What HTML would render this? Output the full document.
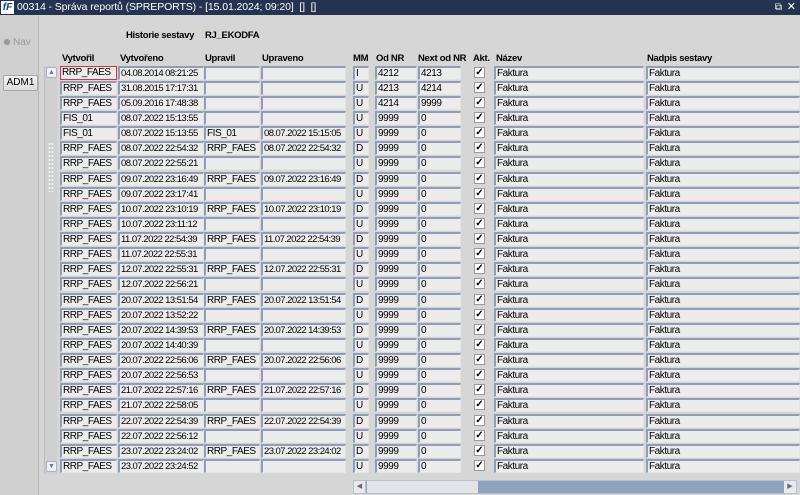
<!DOCTYPE html>
<html><head><meta charset="utf-8"><style>
*{margin:0;padding:0;box-sizing:border-box}
body{width:800px;height:495px;overflow:hidden;background:#d6d6d6;font-family:"Liberation Sans",sans-serif;font-size:10px;color:#000;position:relative}
#tb{position:absolute;left:0;top:0;width:800px;height:15px;background:#25344e;color:#fff;font-size:10.5px;line-height:15px}
#tb .lg{position:absolute;left:1px;top:1px;width:13px;height:13px;background:#fff;color:#1a3ca0;font-weight:bold;font-style:italic;font-size:10px;line-height:13px;text-align:center}
#tb .t{position:absolute;left:17px;top:0;white-space:nowrap;letter-spacing:-0.1px}
#left{position:absolute;left:0;top:15px;width:39px;height:480px;background:#d0d0d0;border-right:1px solid #b8b8b8}
.nav{position:absolute;left:3px;top:22px;color:#9a9a9a;font-size:10px}
.nav i{display:inline-block;width:8px;height:8px;border-radius:50%;background:#9a9a9a;border:1px solid #c8c8c8;vertical-align:-1px;margin-right:2px}
.adm{position:absolute;left:3px;top:60px;width:35px;height:16px;border:1px solid #a8a8a8;border-radius:2px;background:linear-gradient(#f4f4f4,#dcdcdc);text-align:center;line-height:14px;font-size:10px}
.h{position:absolute;font-weight:bold;font-size:9.5px;white-space:nowrap;letter-spacing:-0.3px}
.vs{position:absolute;left:44px;top:66px;width:13px;height:408px;background:#cfcfcf;border-left:1px solid #bdbdbd}
.ab{position:absolute;left:1px;width:11px;height:11px;border:1px solid #a8b4c6;border-radius:2px;background:#eef0f4;color:#6a7a94;font-size:7px;line-height:9px;text-align:center}
.dots{position:absolute;left:3px;top:76px;width:6px;height:50px;background:radial-gradient(circle,#f4f4f4 0.8px,transparent 1.2px) 0 0/3px 4px}
.r{position:absolute;left:0;width:800px;height:15px}
.r div{position:absolute;top:0;height:14px;background:#ececec;border:1px solid #e4e4e4;border-top:2px solid #8f9eb6;border-left:2px solid #8f9eb6;padding-left:1px;line-height:11px;overflow:hidden;white-space:nowrap;letter-spacing:-0.45px}
.r div.b,.r div.d{font-size:9.5px;letter-spacing:-0.55px}
.a{left:60px;width:57px}.b{left:118px;width:86px}.c{left:204px;width:56px}.d{left:261px;width:85px}
.e{left:353px;width:16px}.f{left:375px;width:42px}.g{left:418px;width:43px}.n{left:494px;width:150px}.p{left:646px;width:154px}
.r span.k{position:absolute;left:474px;top:1px;width:11px;height:11px;background:#fff;border:1px solid #9a9a9a;font-size:10px;line-height:9px;text-align:center;font-weight:bold}
.hs{position:absolute;left:353px;top:480px;width:444px;height:14px;background:#8fa3bf;border:1px solid #b4bfd0}
.hs .th{position:absolute;left:13px;top:0;width:111px;height:12px;background:#e2e4e8}
.hs .l{position:absolute;left:0;top:0;width:12px;height:12px;background:#e8eaee;border-right:1px solid #b4bfd0;font-size:7px;line-height:12px;text-align:center;color:#667}
.hs .rr{position:absolute;right:0;top:0;width:12px;height:12px;background:#e8eaee;font-size:7px;line-height:12px;text-align:center;color:#667}
</style></head><body>
<div id="tb"><div class="lg">fF</div><div class="t">00314 - Správa reportů (SPREPORTS) - [15.01.2024; 09:20]&nbsp; []&nbsp; []</div>
<div style="position:absolute;right:18px;top:0;font-size:10px">&#10697;</div><div style="position:absolute;right:4px;top:0;font-size:11px">&#10005;</div></div>
<div id="left"><div class="nav"><i></i>Nav</div><div class="adm">ADM1</div></div>
<div class="h" style="left:126px;top:30px">Historie sestavy</div>
<div class="h" style="left:205px;top:30px">RJ_EKODFA</div>
<div class="h" style="left:62px;top:53px">Vytvořil</div>
<div class="h" style="left:120px;top:53px">Vytvořeno</div>
<div class="h" style="left:205px;top:53px">Upravil</div>
<div class="h" style="left:262px;top:53px">Upraveno</div>
<div class="h" style="left:353px;top:53px">MM</div>
<div class="h" style="left:376px;top:53px">Od NR</div>
<div class="h" style="left:418px;top:53px">Next od NR</div>
<div class="h" style="left:473px;top:53px">Akt.</div>
<div class="h" style="left:496px;top:53px">Název</div>
<div class="h" style="left:647px;top:53px">Nadpis sestavy</div>
<div class="vs"><div class="ab" style="top:1px">&#9650;</div><div class="dots"></div><div class="ab" style="top:395px">&#9660;</div></div>

<div class="r" style="top:66px"><div class="a" style="border:1px solid #e03030">RRP_FAES</div><div class="b">04.08.2014 08:21:25</div><div class="c"></div><div class="d"></div><div class="e">I</div><div class="f">4212</div><div class="g">4213</div><span class="k">✓</span><div class="n">Faktura</div><div class="p">Faktura</div></div>
<div class="r" style="top:81px"><div class="a">RRP_FAES</div><div class="b">31.08.2015 17:17:31</div><div class="c"></div><div class="d"></div><div class="e">U</div><div class="f">4213</div><div class="g">4214</div><span class="k">✓</span><div class="n">Faktura</div><div class="p">Faktura</div></div>
<div class="r" style="top:96px"><div class="a">RRP_FAES</div><div class="b">05.09.2016 17:48:38</div><div class="c"></div><div class="d"></div><div class="e">U</div><div class="f">4214</div><div class="g">9999</div><span class="k">✓</span><div class="n">Faktura</div><div class="p">Faktura</div></div>
<div class="r" style="top:111px"><div class="a">FIS_01</div><div class="b">08.07.2022 15:13:55</div><div class="c"></div><div class="d"></div><div class="e">U</div><div class="f">9999</div><div class="g">0</div><span class="k">✓</span><div class="n">Faktura</div><div class="p">Faktura</div></div>
<div class="r" style="top:126px"><div class="a">FIS_01</div><div class="b">08.07.2022 15:13:55</div><div class="c">FIS_01</div><div class="d">08.07.2022 15:15:05</div><div class="e">U</div><div class="f">9999</div><div class="g">0</div><span class="k">✓</span><div class="n">Faktura</div><div class="p">Faktura</div></div>
<div class="r" style="top:141px"><div class="a">RRP_FAES</div><div class="b">08.07.2022 22:54:32</div><div class="c">RRP_FAES</div><div class="d">08.07.2022 22:54:32</div><div class="e">D</div><div class="f">9999</div><div class="g">0</div><span class="k">✓</span><div class="n">Faktura</div><div class="p">Faktura</div></div>
<div class="r" style="top:156px"><div class="a">RRP_FAES</div><div class="b">08.07.2022 22:55:21</div><div class="c"></div><div class="d"></div><div class="e">U</div><div class="f">9999</div><div class="g">0</div><span class="k">✓</span><div class="n">Faktura</div><div class="p">Faktura</div></div>
<div class="r" style="top:172px"><div class="a">RRP_FAES</div><div class="b">09.07.2022 23:16:49</div><div class="c">RRP_FAES</div><div class="d">09.07.2022 23:16:49</div><div class="e">D</div><div class="f">9999</div><div class="g">0</div><span class="k">✓</span><div class="n">Faktura</div><div class="p">Faktura</div></div>
<div class="r" style="top:187px"><div class="a">RRP_FAES</div><div class="b">09.07.2022 23:17:41</div><div class="c"></div><div class="d"></div><div class="e">U</div><div class="f">9999</div><div class="g">0</div><span class="k">✓</span><div class="n">Faktura</div><div class="p">Faktura</div></div>
<div class="r" style="top:202px"><div class="a">RRP_FAES</div><div class="b">10.07.2022 23:10:19</div><div class="c">RRP_FAES</div><div class="d">10.07.2022 23:10:19</div><div class="e">D</div><div class="f">9999</div><div class="g">0</div><span class="k">✓</span><div class="n">Faktura</div><div class="p">Faktura</div></div>
<div class="r" style="top:217px"><div class="a">RRP_FAES</div><div class="b">10.07.2022 23:11:12</div><div class="c"></div><div class="d"></div><div class="e">U</div><div class="f">9999</div><div class="g">0</div><span class="k">✓</span><div class="n">Faktura</div><div class="p">Faktura</div></div>
<div class="r" style="top:232px"><div class="a">RRP_FAES</div><div class="b">11.07.2022 22:54:39</div><div class="c">RRP_FAES</div><div class="d">11.07.2022 22:54:39</div><div class="e">D</div><div class="f">9999</div><div class="g">0</div><span class="k">✓</span><div class="n">Faktura</div><div class="p">Faktura</div></div>
<div class="r" style="top:247px"><div class="a">RRP_FAES</div><div class="b">11.07.2022 22:55:31</div><div class="c"></div><div class="d"></div><div class="e">U</div><div class="f">9999</div><div class="g">0</div><span class="k">✓</span><div class="n">Faktura</div><div class="p">Faktura</div></div>
<div class="r" style="top:262px"><div class="a">RRP_FAES</div><div class="b">12.07.2022 22:55:31</div><div class="c">RRP_FAES</div><div class="d">12.07.2022 22:55:31</div><div class="e">D</div><div class="f">9999</div><div class="g">0</div><span class="k">✓</span><div class="n">Faktura</div><div class="p">Faktura</div></div>
<div class="r" style="top:277px"><div class="a">RRP_FAES</div><div class="b">12.07.2022 22:56:21</div><div class="c"></div><div class="d"></div><div class="e">U</div><div class="f">9999</div><div class="g">0</div><span class="k">✓</span><div class="n">Faktura</div><div class="p">Faktura</div></div>
<div class="r" style="top:293px"><div class="a">RRP_FAES</div><div class="b">20.07.2022 13:51:54</div><div class="c">RRP_FAES</div><div class="d">20.07.2022 13:51:54</div><div class="e">D</div><div class="f">9999</div><div class="g">0</div><span class="k">✓</span><div class="n">Faktura</div><div class="p">Faktura</div></div>
<div class="r" style="top:308px"><div class="a">RRP_FAES</div><div class="b">20.07.2022 13:52:22</div><div class="c"></div><div class="d"></div><div class="e">U</div><div class="f">9999</div><div class="g">0</div><span class="k">✓</span><div class="n">Faktura</div><div class="p">Faktura</div></div>
<div class="r" style="top:323px"><div class="a">RRP_FAES</div><div class="b">20.07.2022 14:39:53</div><div class="c">RRP_FAES</div><div class="d">20.07.2022 14:39:53</div><div class="e">D</div><div class="f">9999</div><div class="g">0</div><span class="k">✓</span><div class="n">Faktura</div><div class="p">Faktura</div></div>
<div class="r" style="top:338px"><div class="a">RRP_FAES</div><div class="b">20.07.2022 14:40:39</div><div class="c"></div><div class="d"></div><div class="e">U</div><div class="f">9999</div><div class="g">0</div><span class="k">✓</span><div class="n">Faktura</div><div class="p">Faktura</div></div>
<div class="r" style="top:353px"><div class="a">RRP_FAES</div><div class="b">20.07.2022 22:56:06</div><div class="c">RRP_FAES</div><div class="d">20.07.2022 22:56:06</div><div class="e">D</div><div class="f">9999</div><div class="g">0</div><span class="k">✓</span><div class="n">Faktura</div><div class="p">Faktura</div></div>
<div class="r" style="top:368px"><div class="a">RRP_FAES</div><div class="b">20.07.2022 22:56:53</div><div class="c"></div><div class="d"></div><div class="e">U</div><div class="f">9999</div><div class="g">0</div><span class="k">✓</span><div class="n">Faktura</div><div class="p">Faktura</div></div>
<div class="r" style="top:383px"><div class="a">RRP_FAES</div><div class="b">21.07.2022 22:57:16</div><div class="c">RRP_FAES</div><div class="d">21.07.2022 22:57:16</div><div class="e">D</div><div class="f">9999</div><div class="g">0</div><span class="k">✓</span><div class="n">Faktura</div><div class="p">Faktura</div></div>
<div class="r" style="top:398px"><div class="a">RRP_FAES</div><div class="b">21.07.2022 22:58:05</div><div class="c"></div><div class="d"></div><div class="e">U</div><div class="f">9999</div><div class="g">0</div><span class="k">✓</span><div class="n">Faktura</div><div class="p">Faktura</div></div>
<div class="r" style="top:414px"><div class="a">RRP_FAES</div><div class="b">22.07.2022 22:54:39</div><div class="c">RRP_FAES</div><div class="d">22.07.2022 22:54:39</div><div class="e">D</div><div class="f">9999</div><div class="g">0</div><span class="k">✓</span><div class="n">Faktura</div><div class="p">Faktura</div></div>
<div class="r" style="top:429px"><div class="a">RRP_FAES</div><div class="b">22.07.2022 22:56:12</div><div class="c"></div><div class="d"></div><div class="e">U</div><div class="f">9999</div><div class="g">0</div><span class="k">✓</span><div class="n">Faktura</div><div class="p">Faktura</div></div>
<div class="r" style="top:444px"><div class="a">RRP_FAES</div><div class="b">23.07.2022 23:24:02</div><div class="c">RRP_FAES</div><div class="d">23.07.2022 23:24:02</div><div class="e">D</div><div class="f">9999</div><div class="g">0</div><span class="k">✓</span><div class="n">Faktura</div><div class="p">Faktura</div></div>
<div class="r" style="top:459px"><div class="a">RRP_FAES</div><div class="b">23.07.2022 23:24:52</div><div class="c"></div><div class="d"></div><div class="e">U</div><div class="f">9999</div><div class="g">0</div><span class="k">✓</span><div class="n">Faktura</div><div class="p">Faktura</div></div>

<div class="hs"><div class="l">&#9664;</div><div class="th"></div><div class="rr">&#9654;</div></div>
</body></html>
